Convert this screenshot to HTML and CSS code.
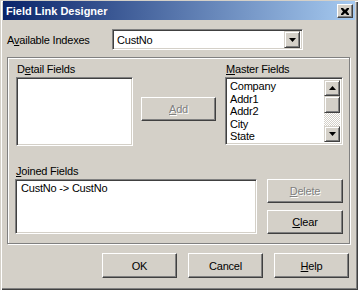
FILE: index.html
```html
<!DOCTYPE html>
<html lang="en">
<head>
    <meta charset="UTF-8">
    <title>Field Link Designer</title>
    <link rel="stylesheet" href="styles.css">
</head>
<body>

<div class="window">
    <div class="titlebar">
        <span class="title">Field Link Designer</span>
        <button class="close-btn">
            <svg width="8" height="7" viewBox="0 0 8 7">
                <path d="M0 0h2l2 2 2-2h2v1l-2 2.5 2 2.5v1h-2l-2-2-2 2h-2v-1l2-2.5-2-2.5z" fill="#000"/>
            </svg>
        </button>
    </div>

    <div class="content">
        <div class="index-row">
            <span class="index-label">A<u>v</u>ailable Indexes</span>
            <div class="combo">
                <span class="combo-value">CustNo</span>
                <span class="arrow-btn">
                    <svg width="7" height="4" viewBox="0 0 7 4"><path d="M0 0h7l-3.5 4z" fill="#000"/></svg>
                </span>
            </div>
        </div>

        <div class="group">
            <div class="fields-row">
                <div class="field-col detail-col">
                    <div class="field-label">D<u>e</u>tail Fields</div>
                    <div class="listbox detail-list"></div>
                </div>
                <button class="btn add-btn" disabled><u>A</u>dd</button>
                <div class="field-col master-col">
                    <div class="field-label"><u>M</u>aster Fields</div>
                    <div class="listbox master-list">
                        <ul class="list-items">
                            <li>Company</li>
                            <li>Addr1</li>
                            <li>Addr2</li>
                            <li>City</li>
                            <li>State</li>
                        </ul>
                        <div class="scrollbar">
                            <span class="arrow-btn scroll-btn">
                                <svg width="7" height="4" viewBox="0 0 7 4"><path d="M0 4h7l-3.5-4z" fill="#000"/></svg>
                            </span>
                            <span class="scroll-thumb"></span>
                            <span class="scroll-track"></span>
                            <span class="arrow-btn scroll-btn">
                                <svg width="7" height="4" viewBox="0 0 7 4"><path d="M0 0h7l-3.5 4z" fill="#000"/></svg>
                            </span>
                        </div>
                    </div>
                </div>
            </div>

            <div class="joined-row">
                <div class="field-col joined-col">
                    <div class="field-label"><u>J</u>oined Fields</div>
                    <div class="listbox joined-list">
                        <ul class="list-items">
                            <li>CustNo -&gt; CustNo</li>
                        </ul>
                    </div>
                </div>
                <div class="side-buttons">
                    <button class="btn side-btn" disabled><u>D</u>elete</button>
                    <button class="btn side-btn"><u>C</u>lear</button>
                </div>
            </div>
        </div>

        <div class="dialog-buttons">
            <button class="btn dialog-btn">OK</button>
            <button class="btn dialog-btn">Cancel</button>
            <button class="btn dialog-btn"><u>H</u>elp</button>
        </div>
    </div>
</div>

</body>
</html>
```

FILE: styles.css
```css
body {
    margin: 0;
    padding: 0;
    background-color: #d4d0c8;
    font-family: 'Liberation Sans', Arial, sans-serif;
    font-size: 11px;
    letter-spacing: -0.2px;
    color: #000;
}

.window {
    width: 358px;
    height: 290px;
    box-sizing: border-box;
    padding: 1px 3px 3px 3px;
    background-color: #d4d0c8;
    box-shadow: inset 1px 1px #d4d0c8, inset 2px 2px #fff, inset -1px -1px #404040, inset -2px -2px #808080;
}

.titlebar {
    height: 19px;
    display: flex;
    align-items: center;
    justify-content: space-between;
    padding: 0 2px 0 3px;
    background: linear-gradient(to right, #0a246a, #a6caf0);
}

.title {
    color: #fff;
    font-weight: bold;
    letter-spacing: 0;
}

.close-btn {
    width: 16px;
    height: 14px;
    padding: 0;
    margin-top: 1px;
    display: flex;
    align-items: center;
    justify-content: center;
    background-color: #d4d0c8;
    border: 1px solid;
    border-color: #fff #404040 #404040 #fff;
    box-shadow: inset -1px -1px #808080;
}

.content {
    padding: 9px 5px 0 4px;
}

u {
    text-decoration: underline;
    text-underline-offset: 1px;
}

/* index selector */
.index-row {
    display: flex;
    align-items: center;
    height: 21px;
}

.index-label {
    width: 105px;
}

.combo {
    width: 191px;
    height: 21px;
    box-sizing: border-box;
    display: flex;
    align-items: center;
    justify-content: space-between;
    padding: 0 2px 0 4px;
    background-color: #fff;
    border: 1px solid;
    border-color: #808080 #fff #fff #808080;
    box-shadow: inset 1px 1px #404040, inset -1px -1px #d4d0c8;
}

.arrow-btn {
    width: 16px;
    height: 17px;
    box-sizing: border-box;
    display: flex;
    align-items: center;
    justify-content: center;
    background-color: #d4d0c8;
    border: 1px solid;
    border-color: #d4d0c8 #404040 #404040 #d4d0c8;
    box-shadow: inset 1px 1px #fff, inset -1px -1px #808080;
}

/* group panel */
.group {
    margin-top: 7px;
    height: 187px;
    box-sizing: border-box;
    padding: 5px 0 0 7px;
    border: 1px solid #808080;
    box-shadow: inset 1px 1px #fff, 1px 1px #fff;
}

.fields-row {
    display: flex;
    align-items: flex-start;
}

.field-label {
    height: 13px;
    line-height: 13px;
    padding-left: 1px;
}

.listbox {
    box-sizing: border-box;
    margin-top: 1px;
    background-color: #fff;
    border: 1px solid;
    border-color: #808080 #fff #fff #808080;
    box-shadow: inset 1px 1px #404040, inset -1px -1px #d4d0c8;
}

.detail-col {
    margin-left: 1px;
}

.detail-list {
    width: 117px;
    height: 69px;
}

.btn {
    box-sizing: border-box;
    padding: 0;
    font-family: inherit;
    font-size: 11px;
    letter-spacing: -0.2px;
    color: #000;
    background-color: #d4d0c8;
    border: 1px solid;
    border-color: #fff #404040 #404040 #fff;
    box-shadow: inset -1px -1px #808080;
}

.btn:disabled {
    color: #808080;
    text-shadow: 1px 1px #fff;
}

.add-btn {
    width: 75px;
    height: 24px;
    margin: 34px 0 0 8px;
}

.master-col {
    margin-left: 9px;
}

.master-list {
    width: 118px;
    height: 68px;
    display: flex;
    padding: 1px 2px;
}

.list-items {
    flex: 1;
    list-style: none;
    margin: 0;
    padding: 1px 0 0 2px;
}

.list-items li {
    height: 12.5px;
    line-height: 12.5px;
    white-space: nowrap;
}

.scrollbar {
    width: 16px;
    margin: 1px 0;
    display: flex;
    flex-direction: column;
}

.scroll-btn {
    height: 16px;
}

.scroll-thumb {
    height: 17px;
    box-sizing: border-box;
    background-color: #d4d0c8;
    border: 1px solid;
    border-color: #d4d0c8 #404040 #404040 #d4d0c8;
    box-shadow: inset 1px 1px #fff, inset -1px -1px #808080;
}

.scroll-track {
    flex: 1;
    background: repeating-conic-gradient(#fff 0 25%, #d4d0c8 0 50%) 0 0 / 2px 2px;
}

.joined-row {
    display: flex;
    align-items: flex-start;
    margin-top: 19px;
}

.joined-list {
    width: 242px;
    height: 55px;
    padding: 1px 0 0 3px;
}

.side-buttons {
    display: flex;
    flex-direction: column;
    gap: 7px;
    margin: 14px 0 0 10px;
}

.side-btn {
    width: 76px;
    height: 24px;
}

/* bottom buttons */
.dialog-buttons {
    display: flex;
    justify-content: flex-end;
    gap: 11px;
    margin-top: 9px;
    padding-right: 1px;
}

.dialog-btn {
    width: 75px;
    height: 25px;
}
```
